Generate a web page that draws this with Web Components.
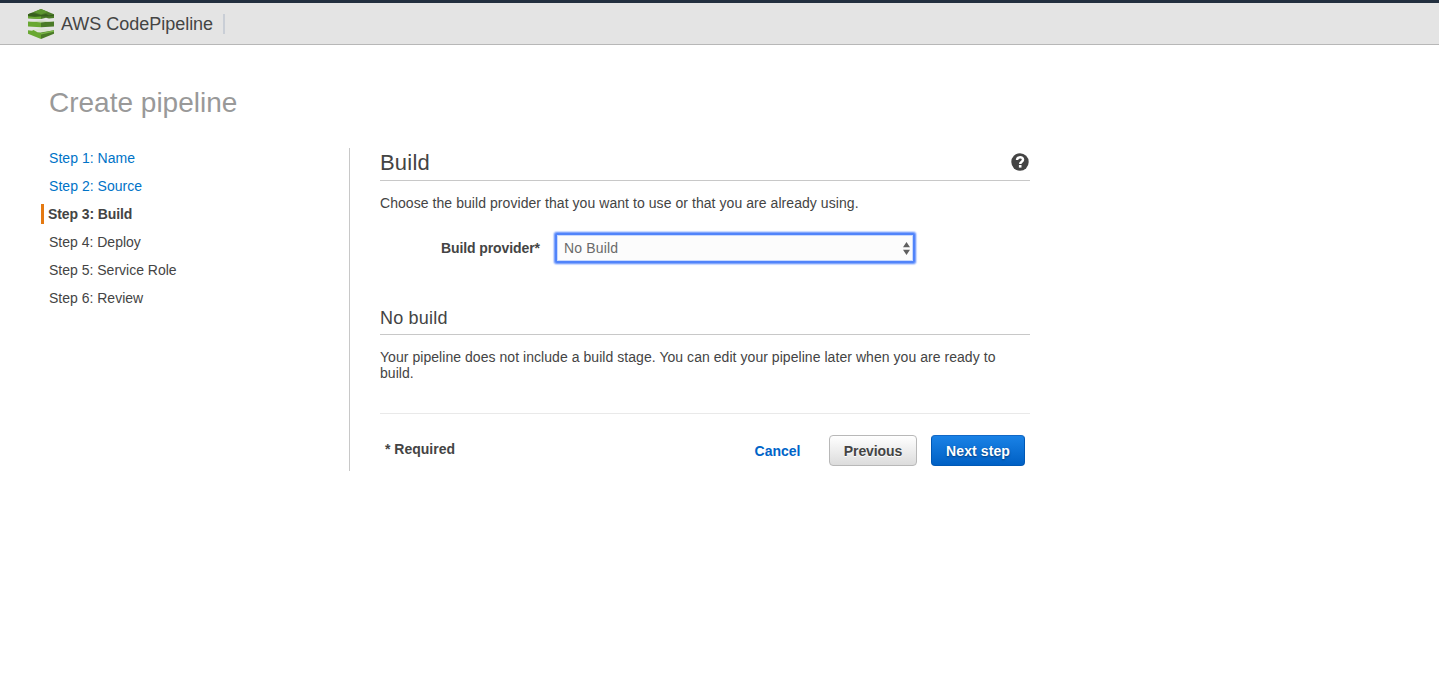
<!DOCTYPE html>
<html lang="en">
<head>
<meta charset="utf-8">
<title>AWS CodePipeline</title>
<style>
body { margin: 0; background: #fff; color: #444; font: 14px/16px "Liberation Sans", Arial, sans-serif; }
</style>
</head>
<body>
<pipeline-app></pipeline-app>
<script>
function define(name, html) {
  const t = document.createElement('template');
  t.innerHTML = html;
  customElements.define(name, class extends HTMLElement {
    constructor() {
      super();
      this.attachShadow({ mode: 'open' }).append(t.content.cloneNode(true));
    }
  });
}

define('pipeline-logo', `
<style>:host{display:block;width:26px;height:30px} svg{display:block}</style>
<svg width="26" height="30" viewBox="0 0 26 30">
  <path fill="#4b7b28" d="M0 5.3 13 0l13 5.3V9l-5 .6-3-.8-5 1.200L0 9.200z"/>
  <path fill="#6aaa35" d="M0 7.200l6 .6 7-.6V10L0 9.200z"/>
  <path fill="#375f1e" d="M0 5.300 4 3.700l9 2.300 5-1 3 1.500 5-1V7l-8 .6-5-.4-6 .6-7-.8z"/>
  <path fill="#5c9630" d="M13 0l7 3-7 2.500L6 3z"/>
  <path fill="#69a832" d="M0 12.400l13 .8v5L0 17.500z"/>
  <path fill="#4b7b28" d="M26 12.400l-13 .8v5l13-.7z"/>
  <path fill="#c9d9ba" d="M0 12.400 13 11.500l13 .9-13 .8z"/>
  <path fill="#dbe5d0" d="M3 21l10-1.700 13 1.800-10 2z"/>
  <path fill="#69a832" d="M0 21.300l4 .5 1.500-.8 4 2.200 3.500.2V30L0 24.700z"/>
  <path fill="#4b7b28" d="M26 21.200 13 23.400V30l13-5.300z"/>
  <path fill="#79b547" d="M13 24l13-2.800v1.500L13 25.500z"/>
</svg>`);

define('app-header', `
<style>
:host{display:flex;align-items:center;box-sizing:border-box;height:45px;padding:0 0 0 28px;background:#e4e4e4;border-top:3px solid #222f3f;border-bottom:1px solid #b7b7b7;font-size:18px;line-height:20px}
.name{margin-left:7px;letter-spacing:-.02px;white-space:nowrap;width:152px}
.rule{width:2px;height:20px;margin-left:10px;background:#c9ced6}
</style>
<pipeline-logo></pipeline-logo><span class="name"><slot></slot></span><span class="rule"></span>`);

define('wizard-step', `
<style>
:host{display:flex;height:20px;line-height:20px;margin-left:8px;white-space:nowrap}
:host([link]){color:#0073c7;letter-spacing:.04px}
:host([current]){margin-left:0;border-left:3px solid #e47911;padding-left:4px;font-weight:bold;letter-spacing:-.1px}
</style><slot></slot>`);

define('wizard-nav', `
<style>:host{display:flex;flex-direction:column;gap:8px;box-sizing:border-box;width:309px;border-right:1px solid #c8c8c8}</style>
<slot></slot>`);

define('section-heading', `
<style>
:host{display:flex;justify-content:space-between;align-items:center;box-sizing:border-box;height:33px;border-bottom:1px solid #c8c8c8;font-size:22px;line-height:28px;padding-bottom:3px;letter-spacing:.2px}
:host([small]){font-size:18px;padding-bottom:1px}
</style><span><slot></slot></span><slot name="end"></slot>`);

define('help-icon', `
<style>:host{display:block;width:18px;height:18px;margin:0 1px 2px 0}svg{display:block}</style>
<svg width="18" height="18" viewBox="0 0 18 18"><circle cx="9" cy="9" r="8.7" fill="#444"/>
<path d="M6 7C6.100 3.500 12 3.300 12 6.700 12 8.700 9.200 8.600 9.200 11" fill="none" stroke="#fff" stroke-width="2.500"/><rect x="7.900" y="12" width="2.600" height="2.600" fill="#fff"/></svg>`);

define('select-box', `
<style>
:host{display:flex;align-items:center;justify-content:space-between;box-sizing:border-box;width:360px;height:30px;padding:0 3px 0 7px;border:2px solid #5184fa;border-radius:2px;background:#fcfcfc;color:#6a6a6a;letter-spacing:.15px;box-shadow:0 0 0 1px #84a7fc,0 0 1px 2px #c7d7fe,inset 0 0 0 1px #c9d9fd}
svg{display:block}
</style><span><slot></slot></span>
<svg width="7" height="13" viewBox="0 0 7 13" fill="#606060"><path d="M3.5 0 7 5.3H0zM0 7.7h7L3.5 13z"/></svg>`);

define('action-button', `
<style>
:host{display:flex;justify-content:center;align-items:center;box-sizing:border-box;height:31px;font-weight:bold;border-radius:4px;white-space:nowrap}
:host([kind=link]){color:#0064c8;width:47px;margin-right:28px}
:host([kind=plain]){width:88px;margin-right:14px;border:1px solid #b8b8b8;background:linear-gradient(#fff,#dcdcdc);text-shadow:0 1px 0 #fff;letter-spacing:-.1px}
:host([kind=primary]){width:94px;border:1px solid #0058b5;border-top-color:#1268c6;background:linear-gradient(#1a82e6,#0060c4);color:#fff;text-shadow:0 1px 2px #003a78;letter-spacing:.1px}
</style><span><slot></slot></span>`);

define('pipeline-app', `
<style>
:host{display:block}
h1{margin:42px 0 0 49px;font-weight:normal;font-size:28px;line-height:32px;color:#999}
.cols{display:flex;margin:29px 0 0 41px;height:323px}
main{width:650px;margin-left:30px}
p{margin:0}
.intro{margin-top:14px;letter-spacing:.06px}
.field{display:flex;align-items:center;margin:22px 0 0 61px}
.field b{width:99px;margin-right:15px;white-space:nowrap;letter-spacing:-.1px}
.sub{margin-top:39px}
.note{margin-top:14px;padding-right:20px;letter-spacing:.05px}
footer{display:flex;justify-content:space-between;margin-top:32px;border-top:1px solid #e9e9e9;padding:21px 5px 0}
footer b{line-height:28px}
.acts{display:flex}
wizard-nav{height:323px}
</style>
<app-header>AWS CodePipeline</app-header>
<h1>Create pipeline</h1>
<div class="cols">
  <wizard-nav>
    <wizard-step link>Step 1: Name</wizard-step>
    <wizard-step link>Step 2: Source</wizard-step>
    <wizard-step current>Step 3: Build</wizard-step>
    <wizard-step>Step 4: Deploy</wizard-step>
    <wizard-step>Step 5: Service Role</wizard-step>
    <wizard-step>Step 6: Review</wizard-step>
  </wizard-nav>
  <main>
    <section-heading>Build<help-icon slot="end"></help-icon></section-heading>
    <p class="intro">Choose the build provider that you want to use or that you are already using.</p>
    <div class="field"><b>Build provider*</b><select-box>No Build</select-box></div>
    <section-heading small class="sub">No build</section-heading>
    <p class="note">Your pipeline does not include a build stage. You can edit your pipeline later when you are ready to build.</p>
    <footer><b>* Required</b><div class="acts">
      <action-button kind="link">Cancel</action-button>
      <action-button kind="plain">Previous</action-button>
      <action-button kind="primary">Next step</action-button>
    </div></footer>
  </main>
</div>`);
</script>
</body>
</html>
